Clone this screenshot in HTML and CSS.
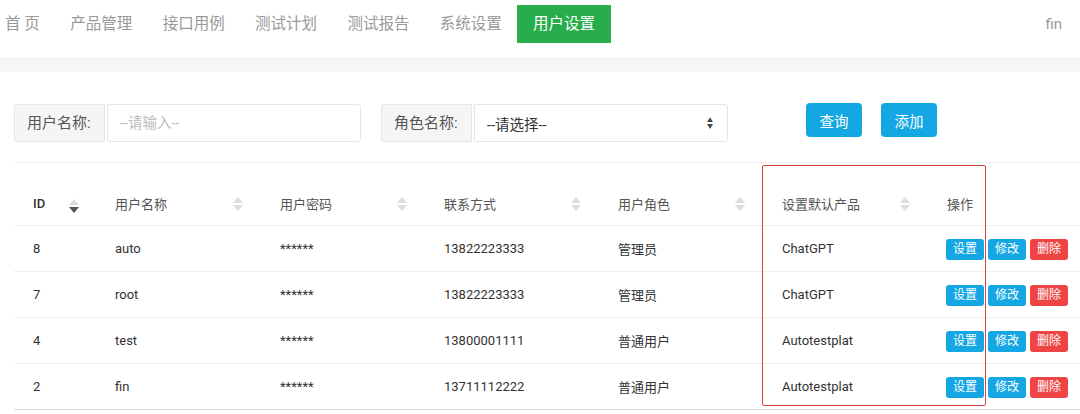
FILE: index.html
```html
<!DOCTYPE html>
<html lang="zh-CN">
<head>
    <meta charset="UTF-8">
    <title>用户设置</title>
    <link rel="stylesheet" href="styles.css">
</head>
<body>
    <div class="navbar">
        <ul class="nav">
            <li>首 页</li>
            <li>产品管理</li>
            <li>接口用例</li>
            <li>测试计划</li>
            <li>测试报告</li>
            <li>系统设置</li>
            <li class="active">用户设置</li>
        </ul>
        <div class="user">fin</div>
    </div>
    <div class="band"></div>

    <div class="content">
        <div class="search">
            <div class="field">
                <span class="field-label">用户名称:</span>
                <input type="text" class="field-input" placeholder="--请输入--">
            </div>
            <div class="field">
                <span class="field-label">角色名称:</span>
                <div class="field-select">--请选择--<span class="caret">&#9650;<br>&#9660;</span></div>
            </div>
            <button class="btn btn-query">查询</button>
            <button class="btn btn-add">添加</button>
        </div>

        <div class="table-wrap">
            <table class="grid">
                <thead>
                    <tr>
                        <th class="c-id bold">ID<span class="sort down"></span></th>
                        <th class="c-name">用户名称<span class="sort"></span></th>
                        <th class="c-pwd">用户密码<span class="sort"></span></th>
                        <th class="c-tel">联系方式<span class="sort"></span></th>
                        <th class="c-role">用户角色<span class="sort"></span></th>
                        <th class="c-prod">设置默认产品<span class="sort"></span></th>
                        <th class="c-op">操作</th>
                    </tr>
                </thead>
                <tbody>
                    <tr>
                        <td>8</td><td>auto</td><td>******</td><td>13822223333</td><td>管理员</td><td>ChatGPT</td>
                        <td class="ops"><span class="mini blue">设置</span><span class="mini blue">修改</span><span class="mini red">删除</span></td>
                    </tr>
                    <tr>
                        <td>7</td><td>root</td><td>******</td><td>13822223333</td><td>管理员</td><td>ChatGPT</td>
                        <td class="ops"><span class="mini blue">设置</span><span class="mini blue">修改</span><span class="mini red">删除</span></td>
                    </tr>
                    <tr>
                        <td>4</td><td>test</td><td>******</td><td>13800001111</td><td>普通用户</td><td>Autotestplat</td>
                        <td class="ops"><span class="mini blue">设置</span><span class="mini blue">修改</span><span class="mini red">删除</span></td>
                    </tr>
                    <tr>
                        <td>2</td><td>fin</td><td>******</td><td>13711112222</td><td>普通用户</td><td>Autotestplat</td>
                        <td class="ops"><span class="mini blue">设置</span><span class="mini blue">修改</span><span class="mini red">删除</span></td>
                    </tr>
                </tbody>
            </table>
            <div class="highlight"></div>
        </div>
    </div>
</body>
</html>
```

FILE: styles.css
```css
body {
    margin: 0;
    font-family: 'Roboto', 'Noto Sans CJK SC', sans-serif;
    color: #333;
    background: #fff;
    overflow: hidden;
    width: 1080px;
    height: 414px;
}
.navbar {
    height: 57px;
    display: flex;
    justify-content: space-between;
    align-items: flex-start;
}
.nav {
    list-style: none;
    margin: 0;
    padding: 5px 0 0 0;
    display: flex;
}
.nav li {
    height: 38px;
    line-height: 38px;
    padding: 0 15.2px;
    font-size: 15.5px;
    color: #999;
}
.nav li:first-child {
    padding-left: 5px;
}
.nav li.active {
    background: #27ad4b;
    color: #fff;
    padding: 0 16px;
}
.user {
    margin-top: 5px;
    margin-right: 18px;
    line-height: 38px;
    font-size: 15px;
    color: #999;
}
.band {
    height: 15px;
    background: #f6f6f6;
}
.content {
    padding: 32px 0 0 14px;
}
.search {
    display: flex;
    align-items: flex-start;
    height: 38px;
    padding-bottom: 20px;
    border-bottom: 1px solid #eee;
}
.field {
    display: flex;
    height: 38px;
    margin-right: 20px;
}
.field-label {
    width: 91px;
    box-sizing: border-box;
    padding-left: 12px;
    line-height: 36px;
    font-size: 15px;
    color: #555;
    background: #f5f5f5;
    border: 1px solid #e6e6e6;
    border-radius: 3px 0 0 3px;
}
.field-input,
.field-select {
    width: 254px;
    height: 38px;
    box-sizing: border-box;
    margin-left: 2px;
    border: 1px solid #e6e6e6;
    border-radius: 0 3px 3px 0;
    font-family: inherit;
    font-size: 14.5px;
    outline: none;
}
.field-input {
    padding-left: 12px;
}
.field-input::placeholder {
    color: #bbb;
}
.field-select {
    display: flex;
    justify-content: space-between;
    align-items: center;
    padding: 0 14px 0 12px;
    color: #333;
}
.caret {
    font-size: 6px;
    line-height: 6px;
    color: #444;
    text-align: center;
}
.btn {
    height: 34px;
    margin-top: -1px;
    padding: 0 13.5px;
    border: none;
    border-radius: 4px;
    background: #15a7e4;
    color: #fff;
    font-family: inherit;
    font-size: 14.5px;
}
.btn-query {
    margin-left: 58px;
}
.btn-add {
    margin-left: 19px;
}
.table-wrap {
    position: relative;
    padding-top: 19px;
}
.grid {
    border-collapse: collapse;
    table-layout: fixed;
    width: 1090px;
    font-size: 13px;
}
.grid th,
.grid td {
    box-sizing: border-box;
}
.grid th {
    position: relative;
    height: 43px;
    text-align: left;
    font-weight: normal;
    color: #555;
    padding: 0 0 0 19px;
    border-bottom: 1px solid #eee;
}
.grid th.bold {
    font-weight: 500;
    color: #333;
}
.grid td {
    height: 46px;
    padding: 0 0 0 19px;
    border-bottom: 1px solid #eee;
}
.grid tbody tr:last-child td {
    border-bottom-color: #ddd;
}
.c-id { width: 82px; }
.c-name { width: 165px; }
.c-pwd { width: 164px; }
.c-tel { width: 174px; }
.c-role { width: 164px; }
.c-prod { width: 165px; }
.sort {
    position: absolute;
    right: 18px;
    top: 15px;
    width: 10px;
    height: 15px;
}
.sort::before,
.sort::after {
    content: "";
    position: absolute;
    left: 0;
    border-left: 5px solid transparent;
    border-right: 5px solid transparent;
}
.sort::before {
    top: 0;
    border-bottom: 6px solid #ddd;
}
.sort::after {
    top: 8px;
    border-top: 6px solid #ddd;
}
.sort.down::after {
    border-top-color: #555;
}
.c-id .sort { right: 17px; top: 17px; }
.ops {
    padding-left: 18px !important;
    padding-top: 3px !important;
    white-space: nowrap;
}
.mini {
    display: inline-block;
    vertical-align: middle;
    height: 21px;
    line-height: 21px;
    padding: 0 7px;
    margin-right: 4px;
    border-radius: 3px;
    font-size: 12px;
    color: #fff;
}
.mini.blue { background: #15a7e4; }
.mini.red { background: #ef4444; }
.highlight {
    position: absolute;
    left: 748px;
    top: 2px;
    width: 222px;
    height: 239px;
    border: 1.5px solid #d4443d;
    border-radius: 2px;
}
```
